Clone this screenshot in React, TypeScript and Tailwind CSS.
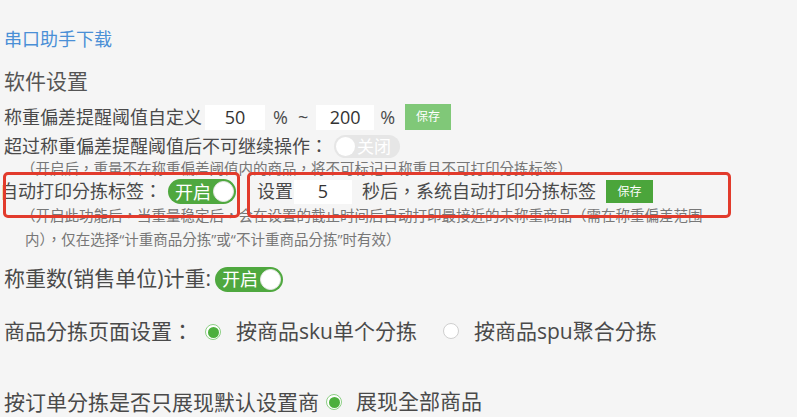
import React from "react";

function Toggle({ on, label }: { on: boolean; label: string }) {
  return on ? (
    <span className="inline-flex items-center justify-between w-[68px] h-[25px] rounded-full bg-[#4fa83f] pl-[7px] pr-[2px]">
      <span className="text-white text-[18px] leading-none">{label}</span>
      <span className="w-[21px] h-[21px] rounded-full bg-white border border-[#e8e8e8]" />
    </span>
  ) : (
    <span className="inline-flex items-center justify-between w-[66px] h-[23px] rounded-full bg-[#e6e6e6] pl-[2px] pr-[9px]">
      <span className="w-[19px] h-[19px] rounded-full bg-white" />
      <span className="text-white text-[17px] leading-none">{label}</span>
    </span>
  );
}

function Radio({ checked }: { checked: boolean }) {
  return checked ? (
    <span className="inline-flex items-center justify-center w-[16px] h-[16px] rounded-full border border-[#8ccf84] bg-white">
      <span className="w-[11px] h-[11px] rounded-full bg-[#4caf3d]" />
    </span>
  ) : (
    <span className="inline-block w-[16px] h-[16px] rounded-full border border-[#cfcfcf] bg-white" />
  );
}

export default function App() {
  return (
    <div
      className="w-[797px] h-[417px] overflow-hidden bg-[#f5f5f5] text-[#4a4a4a] pt-[27px]"
      style={{ fontFamily: '"Open Sans", "Noto Sans CJK TC", "Noto Sans CJK SC", sans-serif' }}
    >
      {/* Download link */}
      <div className="h-[24px] flex items-center pl-[4px] text-[18px] text-[#4a8fd6]">串口助手下载</div>

      {/* Title */}
      <div className="mt-[17px] h-[28px] flex items-center pl-[4px] text-[21px] text-[#555]">软件设置</div>

      {/* Threshold row */}
      <div className="mt-[8px] h-[26px] flex items-center pl-[4px] text-[18px]">
        <span>称重偏差提醒阈值自定义</span>
        <span className="ml-[3px] w-[60px] h-[25px] bg-white flex items-center justify-center text-[18px] text-[#333]">50</span>
        <span className="ml-[8px]">%</span>
        <span className="ml-[10px]">~</span>
        <span className="ml-[8px] w-[58px] h-[25px] bg-white flex items-center justify-center text-[18px] text-[#333]">200</span>
        <span className="ml-[6px]">%</span>
        <span className="ml-[10px] w-[46px] h-[26px] bg-[#80c878] text-white text-[12px] flex items-center justify-center">保存</span>
      </div>

      {/* Block row */}
      <div className="mt-[4px] h-[24px] flex items-center pl-[4px] text-[18px]">
        <span className="w-[330px]">超过称重偏差提醒阈值后不可继续操作：</span>
        <Toggle on={false} label="关闭" />
      </div>
      <div className="mt-[2px] h-[18px] flex items-center pl-[21px] text-[14.5px] text-[#777]">
        （开启后，重量不在称重偏差阈值内的商品，将不可标记已称重且不可打印分拣标签）
      </div>

      {/* Auto print row */}
      <div className="mt-[1px] h-[25px] flex items-center text-[18px]">
        <div className="relative flex items-center w-[240px]">
          <span className="w-[168px]">自动打印分拣标签：</span>
          <Toggle on label="开启" />
          <span className="absolute left-[3px] right-0 top-[-6px] bottom-[-13px] border-[3px] border-[#e23b2c] rounded-[5px]" />
        </div>
        <div className="relative flex items-center w-[484px] ml-[7px] pl-[10px]">
          <span>设置</span>
          <span className="ml-[1px] w-[58px] h-[24px] bg-white flex items-center justify-center text-[18px] text-[#333]">5</span>
          <span className="ml-[10px]">秒后，系统自动打印分拣标签</span>
          <span className="ml-[10px] w-[47px] h-[23px] bg-[#4ba53b] text-white text-[12px] flex items-center justify-center">保存</span>
          <span className="absolute left-0 right-0 top-[-6px] bottom-[-13px] border-[3px] border-[#e23b2c] rounded-[5px]" />
        </div>
      </div>
      <div className="pl-[21px] text-[14.5px] leading-[24px] text-[#777]">
        <div>（开启此功能后，当重量稳定后，会在设置的截止时间后自动打印最接近的未称重商品（需在称重偏差范围</div>
        <div className="pl-[4px]">内），仅在选择“计重商品分拣”或“不计重商品分拣”时有效）</div>
      </div>

      {/* Weight count row */}
      <div className="mt-[13px] h-[28px] flex items-center pl-[4px] text-[21px]">
        <span className="w-[211px]">称重数(销售单位)计重:</span>
        <Toggle on label="开启" />
      </div>

      {/* Sort page setting */}
      <div className="mt-[25px] h-[28px] flex items-center pl-[4px] text-[21px]">
        <span className="w-[201px]">商品分拣页面设置：</span>
        <Radio checked />
        <span className="ml-[15px]">按商品sku单个分拣</span>
        <span className="ml-[26px]">
          <Radio checked={false} />
        </span>
        <span className="ml-[15px]">按商品spu聚合分拣</span>
      </div>

      {/* Order sort */}
      <div className="mt-[42px] flex items-start pl-[4px] text-[21px]">
        <span className="w-[322px] leading-[28px]">按订单分拣是否只展现默认设置商品</span>
        <span className="h-[28px] flex items-center">
          <Radio checked />
          <span className="ml-[14px]">展现全部商品</span>
        </span>
      </div>
    </div>
  );
}
